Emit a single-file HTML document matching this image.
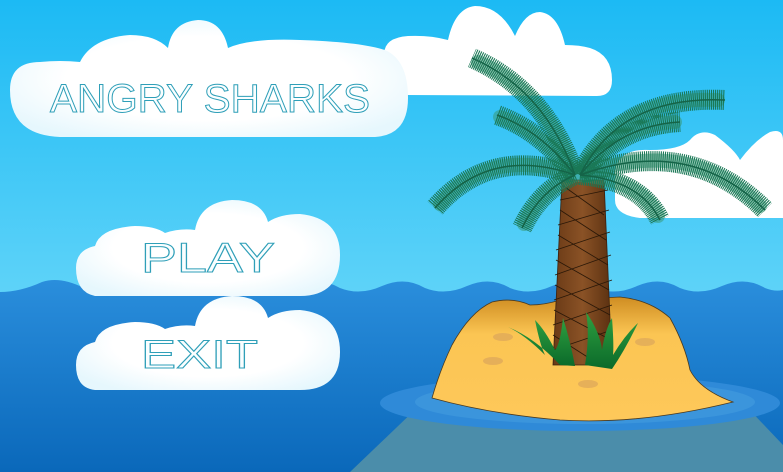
<!DOCTYPE html>
<html><head><style>html,body{margin:0;padding:0;overflow:hidden;width:783px;height:472px}</style></head><body>
<svg width="783" height="472" viewBox="0 0 783 472" xmlns="http://www.w3.org/2000/svg">
<defs>
<linearGradient id="sky" x1="0" y1="0" x2="0" y2="1"><stop offset="0" stop-color="#1cbaf4"/><stop offset="1" stop-color="#86e2fb"/></linearGradient>
<linearGradient id="sea" x1="0" y1="0" x2="0" y2="1"><stop offset="0" stop-color="#2a8edc"/><stop offset="1" stop-color="#0a68ba"/></linearGradient>
<linearGradient id="sand" x1="0" y1="0" x2="0" y2="1"><stop offset="0" stop-color="#cf8d22"/><stop offset="0.3" stop-color="#fbc553"/><stop offset="1" stop-color="#fec85a"/></linearGradient>
<linearGradient id="trunk" x1="0" y1="0" x2="1" y2="0"><stop offset="0" stop-color="#6a3a16"/><stop offset="0.5" stop-color="#8a5226"/><stop offset="1" stop-color="#5a3010"/></linearGradient>
<linearGradient id="grass" x1="0" y1="0" x2="0" y2="1"><stop offset="0" stop-color="#2fa040"/><stop offset="1" stop-color="#0b6a2a"/></linearGradient>
<radialGradient id="cl" cx="0.5" cy="0.5" r="0.6"><stop offset="0.6" stop-color="#ffffff"/><stop offset="1" stop-color="#e6f7fd"/></radialGradient>
</defs>
<rect width="783" height="472" fill="url(#sky)"/>
<g fill="#fff">
<path d="M385,60 Q380,38 408,36 Q430,35 448,40 Q455,8 475,6 Q500,6 515,36 Q525,12 540,12 Q558,14 565,45 Q580,45 590,48 Q612,55 612,80 Q612,97 595,96 L405,95 Q385,92 385,60Z"/>
<path d="M615,170 Q620,148 650,150 Q680,150 690,140 Q700,128 715,135 Q735,150 740,160 Q755,140 770,132 Q783,128 783,140 L783,218 L640,218 Q615,215 615,200Z"/>
</g>
<path fill="url(#cl)" d="M10,90 Q10,62 40,62 Q60,60 80,62 Q92,38 130,35 Q155,35 168,48 Q172,22 198,20 Q222,20 228,48 Q250,38 300,40 Q360,42 385,50 Q408,60 408,98 Q408,135 375,137 L60,137 Q10,135 10,90Z"/>
<path fill="url(#sea)" d="M0,292 Q20,292 42,282 Q60,276 84,288 Q105,296 127,286 Q150,276 170,288 Q190,296 212,286 Q235,276 255,288 Q275,296 297,286 Q320,276 340,288 Q360,296 382,286 Q405,276 425,288 Q445,296 467,286 Q490,276 510,288 Q530,296 552,286 Q575,276 595,288 Q615,296 637,286 Q660,276 680,288 Q700,296 722,286 Q745,276 765,288 Q775,292 783,290 L783,472 L0,472Z"/>
<polygon fill="#4b8daa" points="350,472 420,405 745,405 783,445 783,472"/>
<ellipse cx="580" cy="403" rx="200" ry="28" fill="#2f8ad8"/>
<ellipse cx="585" cy="402" rx="170" ry="22" fill="#3b95dc"/>
<path fill="url(#sand)" stroke="#4a3a20" stroke-width="0.8" d="M432,398 Q440,370 452,345 Q470,312 492,302 Q512,297 530,305 Q545,305 560,300 L620,297 Q650,300 670,318 Q685,345 690,370 Q700,390 733,402 Q640,425 560,420 Q490,414 432,398Z"/>
<g fill="#e0aa5a" opacity="0.8">
<ellipse cx="503" cy="337" rx="10" ry="4"/><ellipse cx="493" cy="361" rx="10" ry="4"/><ellipse cx="588" cy="384" rx="10" ry="4"/><ellipse cx="645" cy="342" rx="10" ry="4"/></g>
<path fill="url(#trunk)" stroke="#3a2010" stroke-width="0.8" d="M562,180 L604,180 L612,365 L553,365Z"/>
<g stroke="#2a1808" stroke-width="0.8" fill="none">
<path d="M560,200 L608,190 M558,225 L609,210 M556,250 L610,232 M555,275 L611,255 M554,300 L612,280 M553,325 L612,305 M553,350 L612,330"/>
<path d="M562,185 L604,215 M560,210 L606,240 M558,235 L608,265 M556,260 L609,290 M555,285 L610,315 M554,310 L611,340 M553,335 L600,365"/>
</g>
<g fill="url(#grass)">
<path d="M508,327 Q535,338 560,365 L575,366 Q570,340 563,318 Q560,345 555,350 Q545,330 535,320 Q540,345 545,355 Q525,335 508,327Z"/>
<path d="M585,365 Q590,335 586,312 Q600,332 602,350 Q605,330 612,318 Q614,345 613,355 Q625,335 638,323 Q625,350 612,369Z"/>
</g>
<g fill="none" stroke-linecap="butt">
<g stroke-width="14" stroke="#3a9a78" opacity="0.55" stroke-linecap="round">
<path d="M575,175 Q545,90 478,62"/>
<path d="M575,175 Q540,130 500,117"/>
<path d="M575,175 Q490,145 440,204"/>
<path d="M575,175 Q540,190 524,224"/>
<path d="M580,175 Q620,95 718,100"/>
<path d="M580,175 Q620,125 675,122"/>
<path d="M580,175 Q690,135 760,206"/>
<path d="M580,175 Q640,180 658,216"/>
</g>
<g stroke-width="20" stroke="#1a7856" stroke-dasharray="1.1 0.9">
<path d="M575,175 Q545,90 472,58"/>
<path d="M575,175 Q540,130 497,115"/>
<path d="M575,175 Q490,145 435,208"/>
<path d="M575,175 Q540,190 522,228"/>
<path d="M580,175 Q620,95 725,100"/>
<path d="M580,175 Q620,125 680,122"/>
<path d="M580,175 Q690,135 765,210"/>
<path d="M580,175 Q640,180 660,220"/>
</g>
<g stroke-width="1.5" stroke="#156448">
<path d="M575,175 Q545,90 472,58"/>
<path d="M575,175 Q540,130 497,115"/>
<path d="M575,175 Q490,145 435,208"/>
<path d="M575,175 Q540,190 522,228"/>
<path d="M580,175 Q620,95 725,100"/>
<path d="M580,175 Q620,125 680,122"/>
<path d="M580,175 Q690,135 765,210"/>
<path d="M580,175 Q640,180 660,220"/>
</g>
</g>
<path fill="url(#cl)" d="M76,268 Q76,250 95,246 Q100,228 135,226 Q155,226 165,233 Q180,228 195,230 Q200,202 232,200 Q262,200 268,222 Q280,214 300,214 Q340,218 340,255 Q340,296 300,296 L95,296 Q76,292 76,268Z"/>
<path fill="url(#cl)" d="M76,365 Q76,346 95,342 Q100,324 135,322 Q155,322 165,329 Q180,324 195,326 Q200,298 232,296 Q262,296 268,318 Q280,310 300,310 Q340,314 340,352 Q340,390 300,390 L95,390 Q76,388 76,365Z"/>
<g font-family="Liberation Sans, sans-serif" fill="#fafeff" stroke="#2f9fb8" stroke-width="1">
<text x="50" y="112" font-size="40" textLength="320" lengthAdjust="spacingAndGlyphs">ANGRY SHARKS</text>
<text x="141" y="272" font-size="42" textLength="134" lengthAdjust="spacingAndGlyphs">PLAY</text>
<text x="141" y="368" font-size="40" textLength="117" lengthAdjust="spacingAndGlyphs">EXIT</text>
</g>
</svg>
</body></html>
